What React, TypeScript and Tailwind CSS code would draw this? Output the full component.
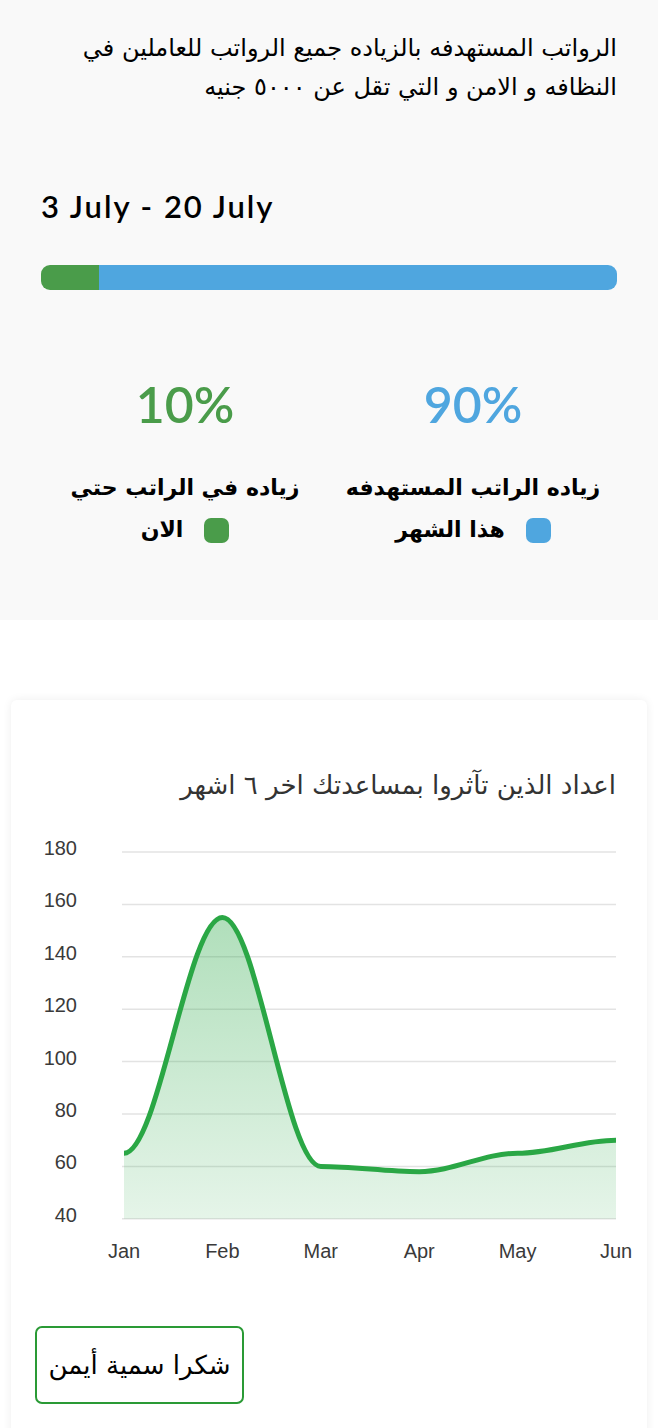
import React from "react";

const months = ["Jan", "Feb", "Mar", "Apr", "May", "Jun"];
const values = [65, 155, 60, 58, 65, 70];
const ticks = [180, 160, 140, 120, 100, 80, 60, 40];

// chart geometry, in svg units
const left = 111;
const right = 605;
const top = 20;
const step = 52.4;
const bottom = top + step * 7;
const xStep = (right - left - 2) / 5;

const yOf = (v: number) => bottom - ((v - 40) / 20) * step;
const xOf = (i: number) => left + 2 + i * xStep;

// smooth curve with flat tangents at each point
function buildPath() {
  const len = xStep * 0.35;
  let d = `M${xOf(0)},${yOf(values[0])}`;
  for (let i = 1; i < values.length; i++) {
    const px = xOf(i - 1);
    const py = yOf(values[i - 1]);
    const x = xOf(i);
    const y = yOf(values[i]);
    d += ` C${px + len},${py} ${x - len},${y} ${x},${y}`;
  }
  return d;
}

function HelpedChart() {
  const line = buildPath();
  const area = `${line} L${xOf(5)},${bottom} L${xOf(0)},${bottom} Z`;

  return (
    <svg width="636" height="440" viewBox="0 0 636 440" className="block font-['Liberation_Sans',Arial,sans-serif]">
      <defs>
        <linearGradient id="fillGreen" x1="0" y1={top} x2="0" y2={bottom} gradientUnits="userSpaceOnUse">
          <stop offset="0" stopColor="#28a745" stopOpacity="0.42" />
          <stop offset="1" stopColor="#28a745" stopOpacity="0.12" />
        </linearGradient>
      </defs>
      {ticks.map((v) => (
        <g key={v}>
          <line x1={left} x2={right} y1={yOf(v)} y2={yOf(v)} stroke="#e3e3e3" strokeWidth="1.5" />
          <text x="66" y={yOf(v) + 3} textAnchor="end" fontSize="20" fill="#3a3a3a">
            {v}
          </text>
        </g>
      ))}
      <path d={area} fill="url(#fillGreen)" />
      <path d={line} fill="none" stroke="#2aa745" strokeWidth="5" strokeLinejoin="round" />
      {months.map((m, i) => (
        <text key={m} x={xOf(i)} y="426" textAnchor="middle" fontSize="20" fill="#3a3a3a">
          {m}
        </text>
      ))}
    </svg>
  );
}

function Stat({ value, color, line1, line2, dot }: { value: string; color: string; line1: string; line2: string; dot: string }) {
  return (
    <div className="flex flex-col items-center">
      <div className={`font-['Lato',sans-serif] text-[50px] font-semibold leading-none ${color}`}>{value}</div>
      <div dir="rtl" className="mt-[38px] flex flex-col items-center font-['DejaVu_Sans',sans-serif] text-[22px] font-bold leading-[42px] text-black">
        <span>{line1}</span>
        <span className="flex items-center gap-[21px]">
          <span className={`h-[25px] w-[25px] rounded-[7px] ${dot}`} />
          <span>{line2}</span>
        </span>
      </div>
    </div>
  );
}

export default function App() {
  return (
    <div className="min-h-[1428px] bg-white">
      <section className="h-[620px] bg-[#f9f9f9] px-[41px] pt-[29px]">
        <p dir="rtl" className="font-['DejaVu_Sans',sans-serif] text-[24px] leading-[39px] text-black">
          الرواتب المستهدفه بالزياده جميع الرواتب للعاملين في النظافه و الامن و التي تقل عن ٥٠٠٠ جنيه
        </p>
        <h2 className="mt-[84px] font-['Lato',sans-serif] text-[31px] font-semibold leading-none tracking-[2px] text-black">
          3 July - 20 July
        </h2>
        <div className="mt-[43px] flex h-[25px] overflow-hidden rounded-[9px]">
          <div className="w-[10%] bg-[#4a9c4a]" />
          <div className="flex-1 bg-[#4fa6df]" />
        </div>
        <div className="mt-[89px] grid grid-cols-2">
          <Stat value="10%" color="text-[#4a9c4a]" line1="زياده في الراتب حتي" line2="الان" dot="bg-[#4a9c4a]" />
          <Stat value="90%" color="text-[#4fa6df]" line1="زياده الراتب المستهدفه" line2="هذا الشهر" dot="bg-[#4fa6df]" />
        </div>
      </section>

      <div className="px-[11px] pt-[80px]">
        <div className="rounded-[6px] bg-white pb-[40px] pt-[70px] shadow-[0_0_10px_rgba(0,0,0,0.07)]">
          <h3 dir="rtl" className="px-[31px] font-['DejaVu_Sans',sans-serif] text-[26px] leading-[30px] text-[#333]">
            اعداد الذين تآثروا بمساعدتك اخر ٦ اشهر
          </h3>
          <div className="mt-[32px]">
            <HelpedChart />
          </div>
          <div className="mt-[54px] px-[24px]">
            <button className="h-[78px] w-[209px] rounded-[7px] border-2 border-[#2a9a35] bg-white font-['DejaVu_Sans',sans-serif] text-[26px] text-black">
              شكرا سمية أيمن
            </button>
          </div>
        </div>
      </div>
    </div>
  );
}
